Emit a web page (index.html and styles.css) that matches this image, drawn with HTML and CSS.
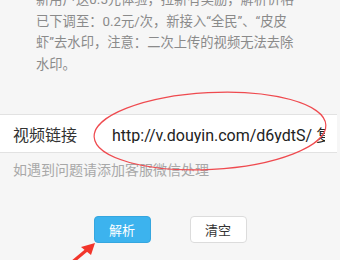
FILE: index.html
```html
<!DOCTYPE html>
<html lang="zh-CN">
<head>
    <meta charset="UTF-8">
    <meta name="viewport" content="width=device-width, initial-scale=1.0">
    <title>视频解析</title>
    <link rel="stylesheet" href="styles.css">
</head>
<body>
    <div id="page">
        <p class="notice">
            新用户送0.5元体验，拉新有奖励，解析价格<br>
            已下调至：0.2元/次，新接入“全民”、“皮皮<br>
            虾”去水印，注意：二次上传的视频无法去除<br>
            水印。
        </p>

        <div class="field-row">
            <label for="video-url">视频链接</label>
            <input type="text" id="video-url" value="http://v.douyin.com/d6ydtS/ 复制此链接">
        </div>
        <p class="hint">如遇到问题请添加客服微信处理</p>

        <div class="actions">
            <button class="btn btn-primary">解析</button>
            <button class="btn">清空</button>
        </div>

        <!-- annotations -->
        <svg class="marks" width="340" height="260" viewBox="0 0 340 260">
            <ellipse cx="210" cy="131" rx="116" ry="38.5" transform="rotate(-3 210 131)" fill="none" stroke="#ef4a4f" stroke-width="1.2"/>
            <line x1="70" y1="264" x2="88" y2="249" stroke="#f2352b" stroke-width="3.2"/>
            <polygon points="95,243 81,247 91,255" fill="#f2352b"/>
        </svg>
    </div>
</body>
</html>
```

FILE: styles.css
```css
body {
    margin: 0;
    background-color: #f6f6f6;
    font-family: Roboto, "Noto Sans CJK SC", sans-serif;
}
#page {
    position: relative;
    width: 340px;
    height: 260px;
    overflow: hidden;
}
.notice {
    margin: -11px 0 0;
    padding: 0 36px;
    font-size: 13.3px;
    line-height: 21.5px;
    color: #8a8a8a;
    white-space: nowrap;
}
.field-row {
    display: flex;
    align-items: center;
    height: 37px;
    margin-top: 39px;
    margin-right: 3px;
    background-color: #fff;
    border-top: 1px solid #e2e2e2;
    border-bottom: 1px solid #e2e2e2;
}
.field-row label {
    width: 99px;
    padding-left: 13px;
    font-size: 16px;
    color: #333;
}
.field-row input {
    width: 213px;
    border: none;
    padding: 0;
    background: transparent;
    font-family: Roboto, "Noto Sans CJK SC", sans-serif;
    font-size: 16px;
    color: #222;
    outline: none;
}
.hint {
    margin: 8px 0 0;
    padding-left: 13px;
    font-size: 14px;
    line-height: 18px;
    color: #a8a8a8;
}
.actions {
    display: flex;
    justify-content: center;
    gap: 39px;
    margin-top: 37px;
}
.btn {
    width: 57px;
    height: 27px;
    padding: 0;
    font-family: Roboto, "Noto Sans CJK SC", sans-serif;
    font-size: 13px;
    color: #333;
    background-color: #fff;
    border: 1px solid #dcdcdc;
    border-radius: 4px;
}
.btn-primary {
    color: #fff;
    background-color: #3cb3ee;
    border-color: #35a6df;
}
.marks {
    position: absolute;
    top: 0;
    left: 0;
    pointer-events: none;
}
```
